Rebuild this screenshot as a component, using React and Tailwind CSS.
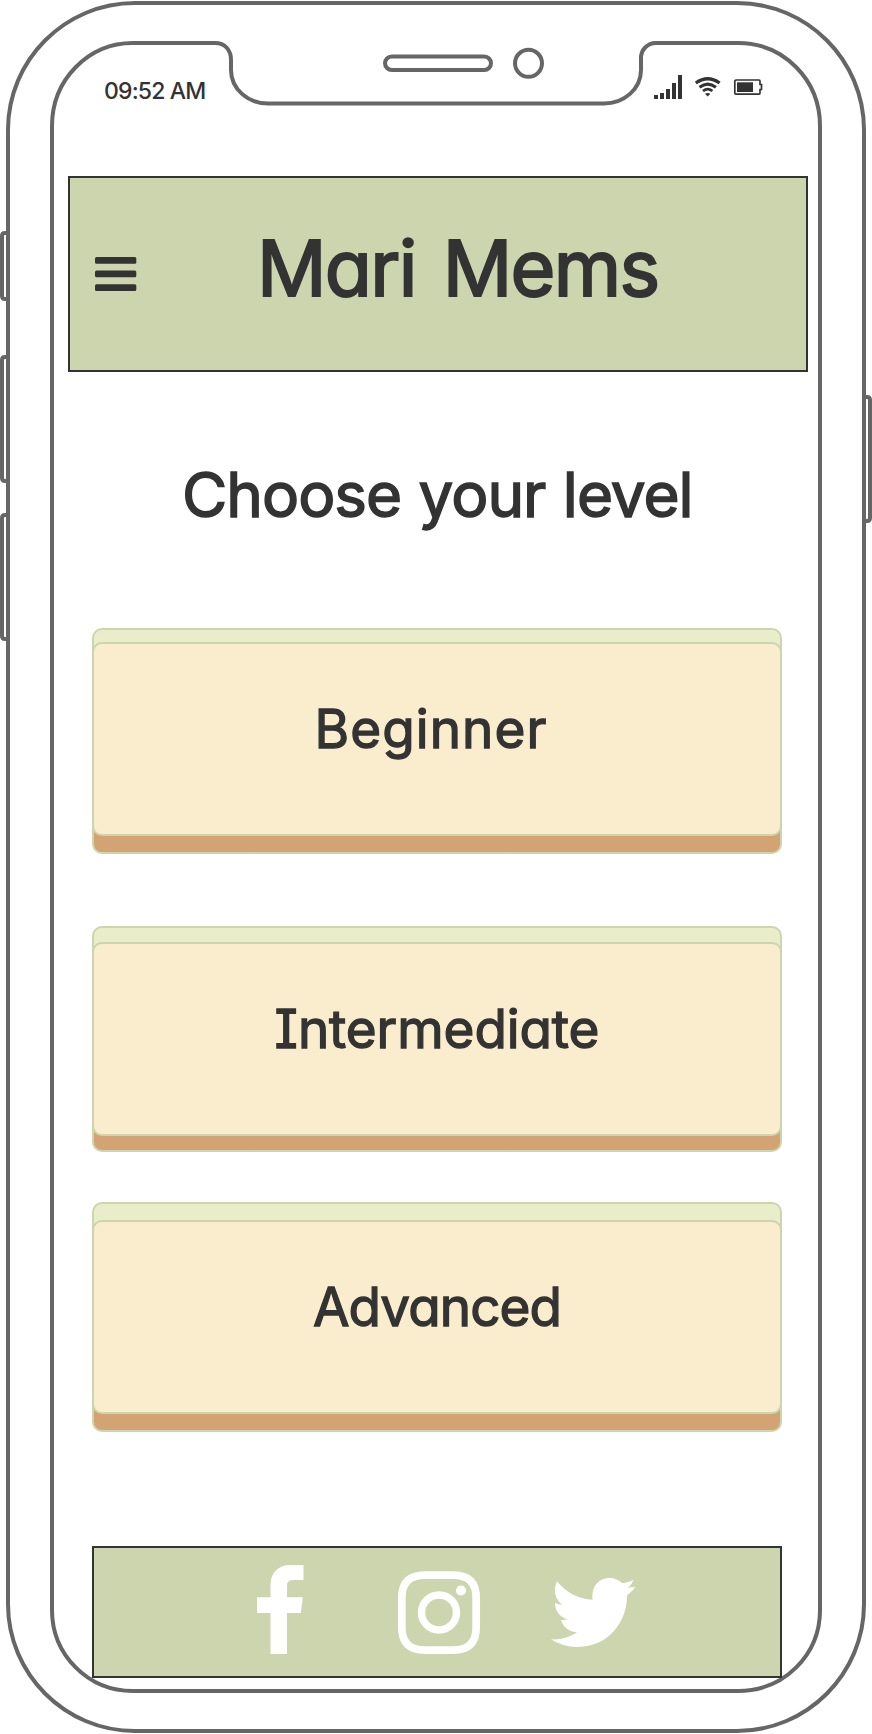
const INK = 'text-[#333333]';

function Frame() {
  return (
    <svg className="absolute inset-0" width="872" height="1734" viewBox="0 0 872 1734" fill="none" stroke="#666666" strokeWidth="4">
      <path d="M135 3H737C807 3 864 60 864 130V1604C864 1674 807 1731 737 1731H135C65 1731 8 1674 8 1604V130C8 60 65 3 135 3Z" />
      <path d="M133 43H215C225 43 231 50 231 60V70C231 89 248 103.500 268 103.500H604C624 103.500 641 89 641 70V58C641 50 647 43 656 43H738C784 43 820 80 820 126V1610C820 1655 784 1691 738 1691H133C88 1691 52 1655 52 1610V126C52 80 88 43 133 43Z" />
      <rect x="385" y="56.500" width="106" height="13.500" rx="6.750" />
      <circle cx="528.500" cy="63.300" r="13.500" />
      <path d="M8 233H5Q2 233 2 236V296Q2 299 5 299H8M8 357H5Q2 357 2 360V478Q2 481 5 481H8M8 515H5Q2 515 2 518V636Q2 639 5 639H8M864 397H867Q870 397 870 400V518Q870 521 867 521H864" />
    </svg>
  );
}

function StatusIcons() {
  return (
    <svg width="110" height="26" viewBox="654 74 110 26" fill="#333333">
      <path d="M654 95h4v4h-4zM660 93h4v6h-4zM666 89h4v10h-4zM672 83h4v16h-4zM678 75h4v24h-4z" />
      <g fill="none" stroke="#333333" strokeWidth="3.300">
        <path d="M695.800 83Q707.700 74.400 719.600 83" />
        <path d="M699.500 87.300Q707.700 80.900 715.900 87.300" strokeWidth="3" />
        <path d="M703 91Q707.700 87.300 712.400 91" strokeWidth="2.800" />
      </g>
      <path d="M705 93.800Q707.700 92 710.400 93.800L707.700 96.400Z" />
      <path d="M736 80H759Q760 80 760 81V84.500H761.500V89.500H760V93Q760 94.200 759 94.200H736Q734.800 94.200 734.800 93V81.200Q734.800 80 736 80Z" fill="none" stroke="#333333" strokeWidth="1.700" />
      <rect x="737" y="82.300" width="16" height="9.700" />
    </svg>
  );
}

function Card({ label, outer, inner, text }) {
  return (
    <button className={`block w-[690px] rounded-[10px] border-2 border-[#cdd5ae] bg-linear-to-b from-[#e9edc9] from-50% to-[#d4a373] to-50% ${outer}`}>
      <span className={`-mx-[2px] flex h-[194px] w-[690px] justify-center rounded-[10px] border-2 border-[#cdd5ae] bg-[#faedcd] pt-[51px] ${inner}`}>
        <span className={`block h-[68px] whitespace-nowrap text-[53px] leading-[68px] font-normal [-webkit-text-stroke:1.3px_#333333] ${text}`}>{label}</span>
      </span>
    </button>
  );
}

export default function App() {
  return (
    <div className={`relative h-[1734px] w-[872px] overflow-hidden bg-white font-['Inter',sans-serif] [font-feature-settings:'cv11','cv08'] ${INK}`}>
      <Frame />
      <div className="relative flex flex-col">
        <div className="flex h-[176px] items-start justify-between pt-[74px] pr-[108px] pl-[104px]">
          <time className="pt-[2px] text-[23px] leading-[30px] font-medium tracking-[-0.85px] whitespace-nowrap">09:52 AM</time>
          <StatusIcons />
        </div>
        <header className="ml-[68px] flex h-[196px] w-[740px] border-2 border-[#333333] bg-[#cdd5ae] pt-[39px] pl-[25px]">
          <svg className="mt-[40px] shrink-0" width="42" height="34" fill="#333333">
            <rect y="0" width="41.300" height="6.800" rx="1.500" />
            <rect y="13.500" width="41.300" height="6.800" rx="1.500" />
            <rect y="27.200" width="41.300" height="6.800" rx="1.500" />
          </svg>
          <h1 className="ml-[120px] text-[77px] leading-[102px] font-normal tracking-[-1.7px] [word-spacing:7px] whitespace-nowrap [-webkit-text-stroke:2px_#333333]">Mari Mems</h1>
        </header>
        <h2 className="mt-[83px] h-[80px] pl-[182px] text-[62px] leading-[80px] font-normal tracking-[-1px] [word-spacing:1px] whitespace-nowrap [-webkit-text-stroke:1.5px_#333333]">Choose your level</h2>
        <main className="ml-[92px] flex flex-col pt-[93px]">
          <Card label="Beginner" outer="h-[226px]" inner="mt-[12px] mb-[16px]" text="-translate-x-[6px] tracking-[1.1px]" />
          <Card label="Intermediate" outer="mt-[72px] h-[226px]" inner="mt-[14px] mb-[14px]" text="tracking-[-0.1px]" />
          <Card label="Advanced" outer="mt-[50px] h-[230px]" inner="mt-[16px] mb-[16px]" text="tracking-[-0.9px]" />
        </main>
        <footer className="mt-[114px] ml-[92px] h-[132px] w-[690px] border-2 border-[#333333] bg-[#cdd5ae]">
          <svg width="686" height="128" viewBox="94 1548 686 128" fill="#ffffff">
            <path d="M303.500 1565V1580H293C289 1580 287 1582 287 1586V1597.300H302.800L300.800 1613H287V1654H270.500V1613H257V1597.300H270.500V1585C270.500 1573 278 1565 290 1565Z" />
            <path fill="none" stroke="#ffffff" strokeWidth="7.700" d="M425 1575.200H453C469 1575.200 476.200 1583 476.200 1598V1627C476.200 1642 469 1650.200 453 1650.200H425C409 1650.200 401.800 1642 401.800 1627V1598C401.800 1583 409 1575.200 425 1575.200Z" />
            <circle cx="439" cy="1612.500" r="17.500" fill="none" stroke="#ffffff" strokeWidth="7.400" />
            <circle cx="461" cy="1590.500" r="5.100" />
            <path transform="translate(230 1530) scale(0.33333)" d="M981 154C1008 187 1045 208 1088 209C1083 173 1104 144 1138 144C1154 144 1167 150 1177 160C1188 158 1199 155 1210 150C1207 160 1201 168 1193 173L1216 170C1210 180 1201 188 1191 196C1192 274 1137 351 1042 351C1013 351 986 343 963 328C993 330 1017 323 1041 307C1017 305 1000 292 993 270Q1004 271 1014 268C990 262 975 244 975 219Q986 224 997 224C974 208 969 179 981 154Z" />
          </svg>
        </footer>
      </div>
    </div>
  );
}
